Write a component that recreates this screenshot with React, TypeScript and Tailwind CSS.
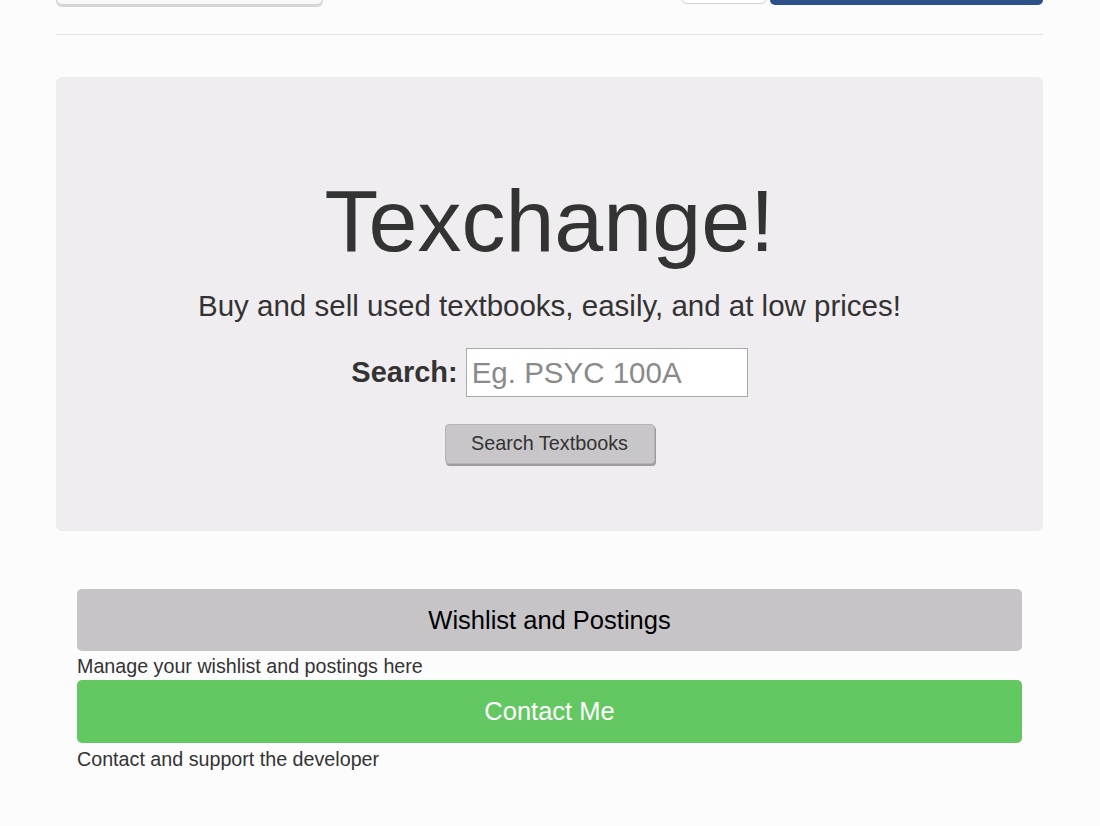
import React from 'react';

export default function App() {
  return (
    <div className="flow-root min-h-[826px] bg-[#fdfcfd] font-['Liberation_Sans',Arial,sans-serif] text-[#333]">
      <div className="mx-[56px] w-[987px]">
        {/* navbar, scrolled mostly out of view */}
        <div className="-mt-[35px] flex h-[40px] items-start justify-between">
          <div className="h-[40px] w-[267px] rounded-[6px] border border-[#d6d4d7] bg-[#f9f8f9] shadow-[0_2px_0_#d6d4d7]" />
          <div className="flex gap-[4px]">
            <div className="h-[39px] w-[84px] rounded-[4px] border border-[#d3d1d4] bg-white" />
            <div className="h-[40px] w-[273px] rounded-[5px] bg-[#2d5089]" />
          </div>
        </div>
        <hr className="mt-[29px] border-t border-[#e6e5e6]" />

        {/* jumbotron */}
        <div className="mt-[42px] flex h-[454px] flex-col items-center rounded-[6px] bg-[#efedf0] pt-[96px]">
          <h1 className="text-[88px] leading-[1.1] text-[#333]">Texchange!</h1>
          <p className="mt-[17px] text-[29.5px] leading-[1.3]">Buy and sell used textbooks, easily, and at low prices!</p>
          <div className="mt-[23px] flex items-center gap-[8px]">
            <label className="text-[29px] font-bold">Search:</label>
            <input
              className="h-[49px] w-[282px] border border-[#a9a9a9] bg-white px-[5px] text-[29.5px] text-[#333] placeholder:text-[#8a8a8a] focus:outline-none"
              placeholder="Eg. PSYC 100A"
            />
          </div>
          <button className="mt-[27px] h-[40px] w-[210px] rounded-[4px] border border-[#b5b3b6] bg-[#c8c6c9] text-[19.8px] text-[#333] shadow-[1px_2px_0_#9e9c9f]">
            Search Textbooks
          </button>
        </div>

        {/* links */}
        <div className="mx-[21px] mt-[58px] flex flex-col">
          <button className="h-[62px] w-full rounded-[5px] bg-[#c6c4c7] text-[25.5px] text-black">Wishlist and Postings</button>
          <p className="mt-[3px] text-[19.7px] leading-[24px] text-[#333]">Manage your wishlist and postings here</p>
          <button className="mt-[2px] h-[63px] w-full rounded-[5px] bg-[#64c862] text-[25.5px] text-white">Contact Me</button>
          <p className="mt-[4px] text-[19.7px] leading-[24px] text-[#333]">Contact and support the developer</p>
        </div>
      </div>
    </div>
  );
}
